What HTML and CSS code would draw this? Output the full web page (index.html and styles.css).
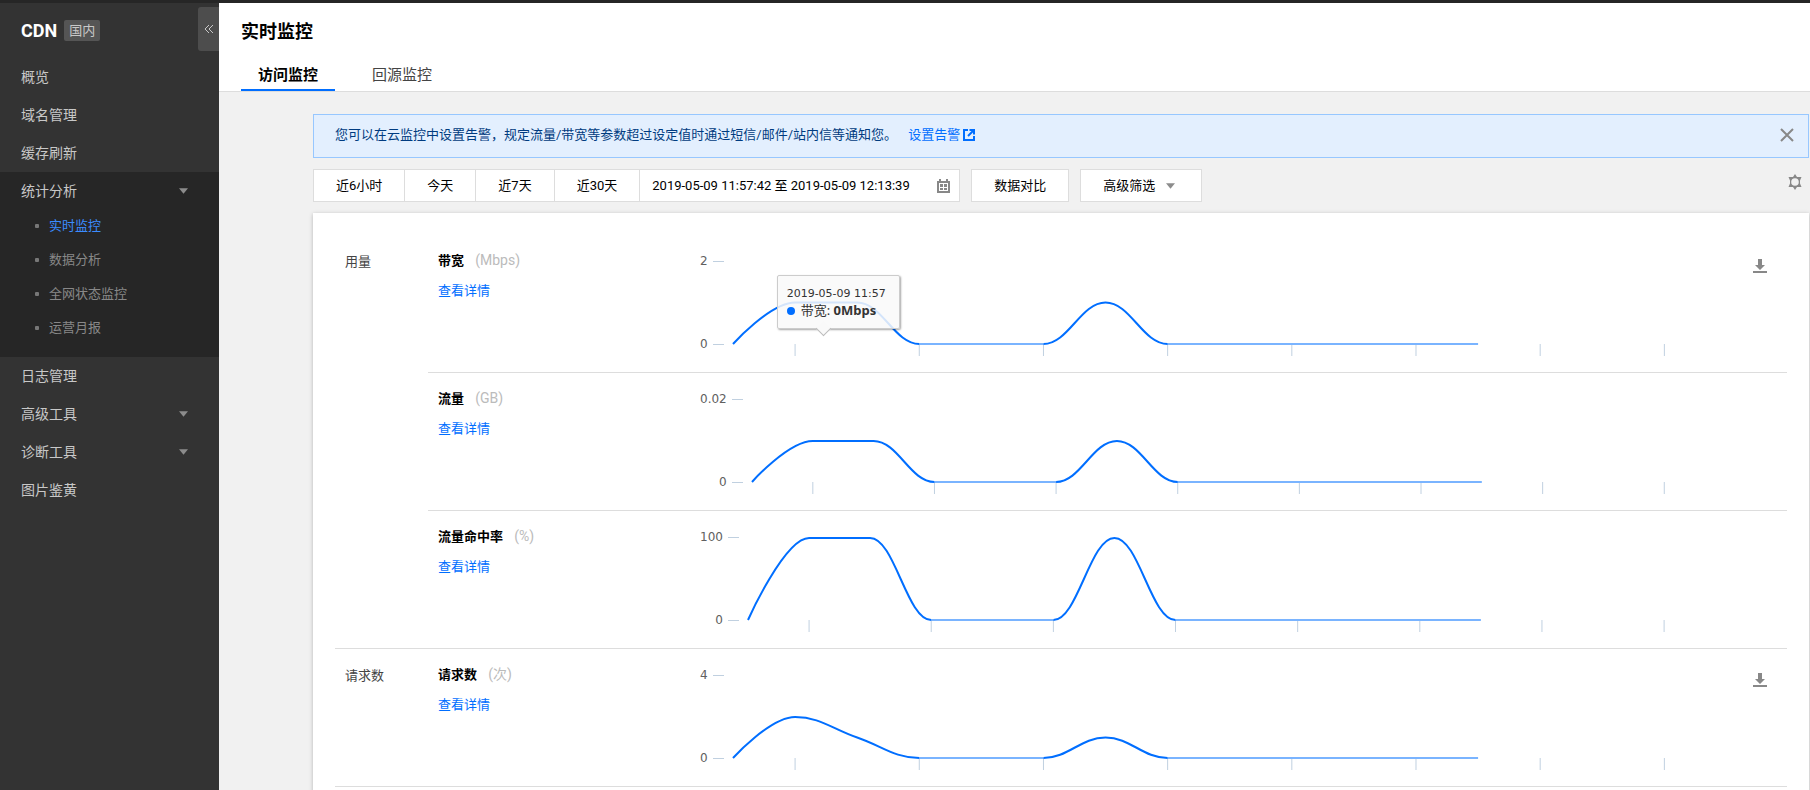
FILE: index.html
```html
<!DOCTYPE html>
<html lang="zh-CN">
<head>
<meta charset="utf-8">
<title>实时监控 - CDN</title>
<link rel="stylesheet" href="styles.css">
</head>
<body>
<svg width="0" height="0" class="sprite" aria-hidden="true">
  <symbol id="i-download" viewBox="0 0 14 16"><path d="M5 1h4v6h3L7 12 2 7h3z"/><path d="M0 13h14v2H0z"/></symbol>
  <symbol id="i-caret" viewBox="0 0 10 6"><path d="M0 0h10L5 6z"/></symbol>
  <symbol id="xticks" viewBox="0 0 150 96" preserveAspectRatio="none"><path class="tick" d="M10 84v12M30 84v12M50 84v12M70 84v12M90 84v12M110 84v12M130 84v12M150 84v12"/></symbol>
</svg>
<div class="app">
  <aside class="sidebar">
    <div class="brand"><strong class="brand-name">CDN</strong><span class="badge">国内</span>
      <button class="collapse" aria-label="收起菜单"><svg width="10" height="10" viewBox="0 0 10 10"><path d="M5 1 1 5l4 4M9 1 5 5l4 4"/></svg></button>
    </div>
    <nav class="menu">
      <a class="item" href="#">概览</a>
      <a class="item" href="#">域名管理</a>
      <a class="item" href="#">缓存刷新</a>
      <div class="group">
        <a class="item item-open" href="#">统计分析<svg class="caret" width="9" height="6"><use href="#i-caret"/></svg></a>
        <ul class="sub">
          <li><a class="active" href="#">实时监控</a></li>
          <li><a href="#">数据分析</a></li>
          <li><a href="#">全网状态监控</a></li>
          <li><a href="#">运营月报</a></li>
        </ul>
      </div>
      <a class="item" href="#">日志管理</a>
      <a class="item" href="#">高级工具<svg class="caret" width="9" height="6"><use href="#i-caret"/></svg></a>
      <a class="item" href="#">诊断工具<svg class="caret" width="9" height="6"><use href="#i-caret"/></svg></a>
      <a class="item" href="#">图片鉴黄</a>
    </nav>
  </aside>
  <main class="main">
    <header class="header">
      <h1>实时监控</h1>
      <nav class="tabs"><a class="tab current" href="#">访问监控</a><a class="tab" href="#">回源监控</a></nav>
    </header>
    <div class="content">
      <div class="notice">
        <p>您可以在云监控中设置告警，规定流量/带宽等参数超过设定值时通过短信/邮件/站内信等通知您。 <a href="#">设置告警<svg class="ext" width="12" height="12" viewBox="0 0 12 12"><path d="M5 1H1v10h10V7" /><path d="M6.500 1H11v4.500M11 1 5 7"/></svg></a></p>
        <button class="plain" aria-label="关闭"><svg class="close" width="14" height="14" viewBox="0 0 14 14"><path d="m1 1 12 12M13 1 1 13"/></svg></button>
      </div>
      <div class="toolbar">
        <div class="range">
          <button>近6小时</button><button>今天</button><button>近7天</button><button>近30天</button>
          <label class="date"><input type="text" aria-label="时间范围" value="2019-05-09 11:57:42 至 2019-05-09 12:13:39"><svg width="13" height="14" viewBox="0 0 13 14"><path fill-rule="evenodd" d="M0 2h2V0h2v2h5V0h2v2h2v12H0zM2 4v8h9V4zM3 5h3v3H3zM7 5h3v3H7zM3 9h3v2H3zM7 9h3v2H7z"/></svg></label>
        </div>
        <button class="btn">数据对比</button>
        <button class="btn">高级筛选<svg class="caret" width="9" height="6"><use href="#i-caret"/></svg></button>
        <button class="plain settings" aria-label="设置"><svg width="16" height="16" viewBox="0 0 16 16"><path fill-rule="evenodd" d="M8 0 10 3h4.500L13 6.500v3l1.500 3.500H10l-2 3-2-3H1.500L3 9.500v-3L1.500 3H6zM8 4.200a3.800 3.800 0 1 0 0 7.600 3.800 3.800 0 0 0 0-7.600z"/></svg></button>
      </div>
      <div class="card">
        <section class="metrics">
          <h2>用量</h2>
          <div class="rows">
            <article class="row">
              <div class="info"><h3>带宽 <small>(Mbps)</small></h3><a href="#">查看详情</a></div>
              <div class="axis"><span>2</span><span>0</span></div>
              <div class="plot">
                <svg viewBox="0 0 150 96" preserveAspectRatio="none"><use href="#xticks" width="150" height="96"/><path class="zero" d="M30 84H50M70 84H120"/><path class="line" d="M0 84C0 84 6 42.500 10 42.500H20C24 42.500 26 84 30 84M50 84C54 84 56 42.500 60 42.500S66 84 70 84"/></svg>
                <div class="tip"><div class="tip-time">2019-05-09 11:57</div><div class="tip-value"><i></i>带宽: <b>0Mbps</b></div></div>
              </div>
              <div class="actions"><button class="plain" aria-label="下载"><svg width="14" height="16"><use href="#i-download"/></svg></button></div>
            </article>
            <article class="row">
              <div class="info"><h3>流量 <small>(GB)</small></h3><a href="#">查看详情</a></div>
              <div class="axis"><span>0.02</span><span>0</span></div>
              <div class="plot">
                <svg viewBox="0 0 150 96" preserveAspectRatio="none"><use href="#xticks" width="150" height="96"/><path class="zero" d="M30 84H50M70 84H120"/><path class="line" d="M0 84C0 84 6 43 10 43H20C24 43 26 84 30 84M50 84C54 84 56 43 60 43S66 84 70 84"/></svg>
              </div>
              <div class="actions"></div>
            </article>
            <article class="row">
              <div class="info"><h3>流量命中率 <small>(%)</small></h3><a href="#">查看详情</a></div>
              <div class="axis"><span>100</span><span>0</span></div>
              <div class="plot">
                <svg viewBox="0 0 150 96" preserveAspectRatio="none"><use href="#xticks" width="150" height="96"/><path class="zero" d="M30 84H50M70 84H120"/><path class="line" d="M0 84C0 84 6 2 10 2H20C24 2 26 84 30 84M50 84C54 84 56 2 60 2S66 84 70 84"/></svg>
              </div>
              <div class="actions"></div>
            </article>
          </div>
        </section>
        <section class="metrics">
          <h2>请求数</h2>
          <div class="rows">
            <article class="row">
              <div class="info"><h3>请求数 <small>(次)</small></h3><a href="#">查看详情</a></div>
              <div class="axis"><span>4</span><span>0</span></div>
              <div class="plot">
                <svg viewBox="0 0 150 96" preserveAspectRatio="none"><use href="#xticks" width="150" height="96"/><path class="zero" d="M30 84H50M70 84H120"/><path class="line" d="M0 84C0 84 6 43 10 43C14 43 16 55 20 63.500C24 72 26 84 30 84M50 84C54 84 56 63.500 60 63.500S66 84 70 84"/></svg>
              </div>
              <div class="actions"><button class="plain" aria-label="下载"><svg width="14" height="16"><use href="#i-download"/></svg></button></div>
            </article>
          </div>
        </section>
      </div>
    </div>
  </main>
</div>
</body>
</html>
```
FILE: styles.css
```css
* { box-sizing: border-box; }
body {
  margin: 0;
  font: 13px/20px Roboto, "Noto Sans CJK SC", sans-serif;
  color: #000;
  background: #f1f1f1;
  overflow: hidden;
}
a { color: #006eff; text-decoration: none; }
h1, h2, h3, p, ul { margin: 0; padding: 0; font-size: inherit; }
button, input { font: inherit; color: inherit; }
button { cursor: pointer; }
svg { display: block; fill: currentColor; }
.sprite { position: absolute; }

.app { display: flex; height: 100vh; border-top: 3px solid #262626; }

/* sidebar */
.sidebar { flex: none; width: 219px; background: #333; color: #c8c8c8; }
.brand { display: flex; align-items: center; gap: 7px; height: 55px; padding-left: 21px; }
.brand-name { color: #fff; font-size: 18px; font-weight: 700; }
.badge { padding: 0 5px; line-height: 21px; background: #555; border-radius: 2px; }
.collapse {
  display: flex; align-items: center; justify-content: center;
  width: 21px; height: 44px; margin-left: auto; margin-bottom: 3px; padding: 0;
  border: 0; border-radius: 3px 0 0 3px; background: #4d4d4d;
}
.collapse svg { fill: none; stroke: #c8c8c8; }
.item { display: flex; align-items: center; justify-content: space-between; height: 38px; padding: 0 31px 0 21px; font-size: 14px; color: #c8c8c8; }
.caret { color: #8c8c8c; }
.group { padding: 1px 0 12px; background: #262626; }
.item-open { height: 36px; }
.sub { list-style: none; }
.sub li { display: flex; align-items: center; height: 34px; padding-left: 35px; }
.sub li::before { content: ""; width: 4px; height: 4px; margin-right: 10px; border-radius: 1px; background: #777; }
.sub a { color: #888; }
.sub .active { color: #3b8cff; }

/* header */
.main { flex: 1; min-width: 0; }
.header { padding: 15px 22px 0; background: #fff; border-bottom: 1px solid #ddd; }
h1 { font-size: 18px; line-height: 28px; }
.tabs { display: flex; gap: 20px; margin-top: 16px; }
.tab { padding: 0 17px; line-height: 27px; border-bottom: 2px solid transparent; font-size: 15px; color: #444; }
.tab.current { color: #000; font-weight: 700; border-color: #006eff; }

.content { padding: 22px 1px 0 94px; }
.plain { padding: 0; border: 0; background: none; color: #888; }

.notice { display: flex; align-items: center; justify-content: space-between; height: 44px; padding: 0 14px 2px 21px; border: 1px solid #97c7ff; background: #e3effe; color: #003b80; }
.notice a { display: inline-flex; align-items: center; gap: 3px; margin-left: 8px; }
.ext { fill: none; stroke: #006eff; stroke-width: 2; }
.close { fill: none; stroke: #888; stroke-width: 2; }

.toolbar { display: flex; align-items: center; gap: 11px; margin-top: 11px; }
.range { display: flex; }
.range button, .btn, .date { display: flex; align-items: center; height: 33px; padding: 0 22px; border: 1px solid #ddd; background: #fff; }
.range button { border-right: 0; }
.date { width: 321px; padding: 0 9px 0 12px; color: #888; }
.date input { flex: 1; min-width: 0; padding: 0; border: 0; outline: 0; color: #000; }
.btn { gap: 11px; }
.btn .caret { margin-right: 4px; }
.settings { align-self: flex-start; margin: 5px 6px 0 auto; }

/* metric card */
.card { margin-top: 11px; padding: 22px 22px 20px; background: #fff; box-shadow: 0 1px 4px rgba(0, 0, 0, .25); }
.metrics { display: flex; border-bottom: 1px solid #ddd; }
h2 { width: 93px; padding: 17px 10px; font-weight: 400; color: #444; }
.rows { flex: 1; min-width: 0; }
.row { display: flex; height: 138px; border-bottom: 1px solid #ddd; }
.row:last-child { height: 137px; border-bottom: 0; }
.info { width: 272px; padding: 15px 0 0 10px; }
.info h3 { margin-bottom: 10px; }
.info small { margin-left: 8px; font-size: 14px; font-weight: 400; color: #bbb; }
.axis { display: flex; flex-direction: column; justify-content: space-between; height: 119px; padding-top: 16px; font: 12px/20px "DejaVu Sans", sans-serif; color: #606060; }
.axis span { display: flex; align-items: center; justify-content: flex-end; gap: 5px; }
.axis span::after { content: ""; width: 11px; height: 1px; background: #c0d0e0; }
.plot { position: relative; flex: 1; min-width: 0; margin: 25px 0 0 9px; }
.plot > svg { width: 100%; height: 96px; overflow: visible; }
.line, .zero, .tick { fill: none; vector-effect: non-scaling-stroke; }
.line { stroke: #006eff; stroke-width: 2; }
.zero { stroke: #7ab4ff; stroke-width: 2; }
.tick { stroke: #c0d0e0; stroke-width: 1; }
#xticks { overflow: visible; }
.actions { display: flex; justify-content: flex-end; align-items: flex-start; width: 123px; padding: 23px 20px 0 0; }

.tip {
  position: absolute; left: 44px; top: 15px; width: 123px; padding: 9px 0 9px 9px;
  border: 1px solid #ccc; border-radius: 2px; background: rgba(249, 249, 249, .85);
  box-shadow: 1px 1px 2px rgba(0, 0, 0, .35);
  line-height: 17px; color: #333; white-space: nowrap;
}
.tip::after {
  content: ""; position: absolute; left: 40px; bottom: -6px; width: 10px; height: 10px;
  border: solid #bbb; border-width: 0 1px 1px 0; background: #f9f9f9; transform: rotate(45deg);
}
.tip-time { font: 11px/17px "DejaVu Sans", sans-serif; }
.tip-value { font-family: "Noto Sans", "Noto Sans CJK SC", sans-serif; }
.tip-value i { display: inline-block; width: 8px; height: 8px; margin-right: 6px; border-radius: 50%; background: #006eff; }
```
